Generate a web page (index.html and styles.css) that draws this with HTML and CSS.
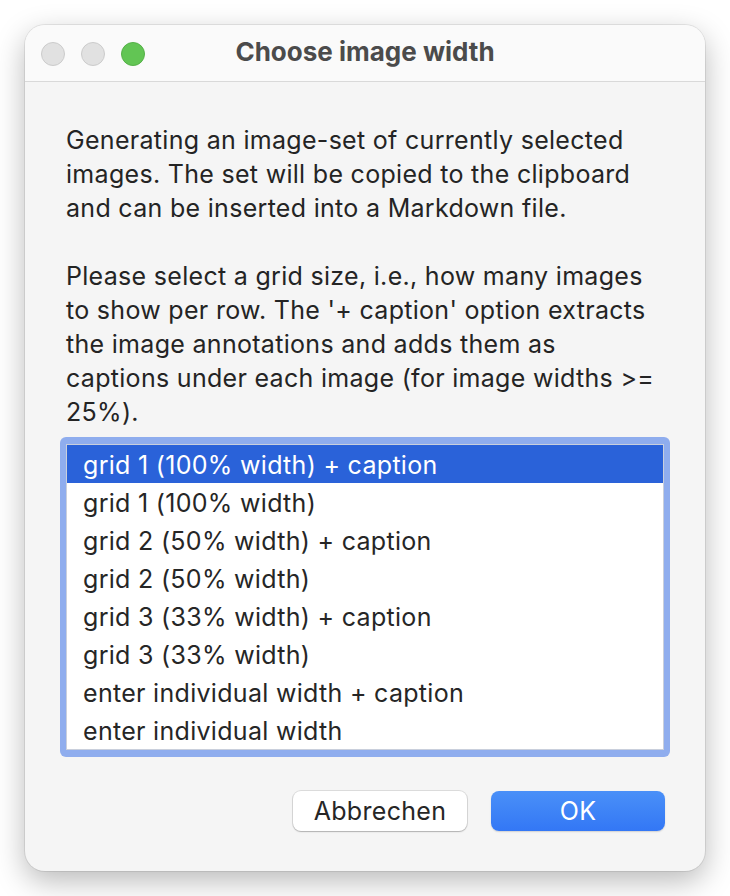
FILE: index.html
```html
<!DOCTYPE html>
<html>
<head>
<meta charset="utf-8">
<link rel="stylesheet" href="styles.css">
</head>
<body>
<div class="window">
  <div class="titlebar">
    <div class="lights">
      <span class="light gray"></span>
      <span class="light gray"></span>
      <span class="light green"></span>
    </div>
    <div class="title">Choose image width</div>
  </div>
  <div class="content">
    <p class="msg">Generating an image-set of currently selected images. The set will be copied to the clipboard and can be inserted into a Markdown file.</p>
    <p class="msg">Please select a grid size, i.e., how many images to show per row. The '+ caption' option extracts the image annotations and adds them as captions under each image (for image widths &gt;= 25%).</p>
    <div class="listring">
      <ul class="list">
        <li class="row selected">grid 1 (100% width) + caption</li>
        <li class="row">grid 1 (100% width)</li>
        <li class="row">grid 2 (50% width) + caption</li>
        <li class="row">grid 2 (50% width)</li>
        <li class="row">grid 3 (33% width) + caption</li>
        <li class="row">grid 3 (33% width)</li>
        <li class="row">enter individual width + caption</li>
        <li class="row">enter individual width</li>
      </ul>
    </div>
    <div class="buttons">
      <button class="btn cancel">Abbrechen</button>
      <button class="btn ok">OK</button>
    </div>
  </div>
</div>
</body>
</html>
```
FILE: styles.css
```css
html, body {
  margin: 0;
  padding: 0;
  background: #ffffff;
}
body {
  width: 730px;
  height: 896px;
  font-family: Inter, "Noto Sans", "Liberation Sans", sans-serif;
  color: #222222;
}
.window {
  margin: 25px 0 0 25px;
  width: 680px;
  height: 846px;
  box-sizing: border-box;
  background: #f5f5f5;
  border-radius: 20px;
  box-shadow: 0 0 0 1px rgba(0,0,0,0.08), 0 10px 30px rgba(0,0,0,0.28);
  display: flex;
  flex-direction: column;
  overflow: hidden;
}
.titlebar {
  height: 56px;
  flex: none;
  background: #fafafa;
  border-bottom: 1px solid #d9d9d9;
  display: flex;
  align-items: center;
  position: relative;
}
.lights {
  display: flex;
  gap: 16px;
  margin-left: 16px;
  margin-top: 1px;
}
.light {
  width: 24px;
  height: 24px;
  border-radius: 50%;
  box-sizing: border-box;
}
.light.gray {
  background: #e1e1e1;
  border: 1px solid #cbcbcb;
}
.light.green {
  background: #62c554;
  border: 1px solid #55b048;
}
.title {
  position: absolute;
  left: 0;
  right: 0;
  top: 12px;
  line-height: 30px;
  text-align: center;
  font-size: 26px;
  font-weight: 700;
  color: #4b4b4b;
  pointer-events: none;
}
.content {
  flex: 1;
  padding: 41px 35px 0 35px;
  display: flex;
  flex-direction: column;
}
.msg {
  margin: 0 12px 34px 6px;
  font-size: 25px;
  line-height: 34px;
  letter-spacing: 0.3px;
  color: #242424;
}
.msg + .msg {
  margin-bottom: 8px;
}
.listring {
  background: #8fadee;
  border-radius: 6px;
  padding: 7px 6px 7px 6px;
}
.list {
  list-style: none;
  margin: 0;
  padding: 0;
  background: #ffffff;
  border: 1px solid #c9cfdc;
}
.row {
  height: 38px;
  box-sizing: border-box;
  padding-top: 2px;
  line-height: 36px;
  padding-left: 16px;
  font-size: 25px;
  letter-spacing: 0.3px;
  color: #262626;
}
.row.selected {
  background: #2a62d9;
  color: #ffffff;
}
.buttons {
  display: flex;
  justify-content: flex-end;
  gap: 24px;
  margin-top: 34px;
  padding-right: 5px;
}
.btn {
  width: 174px;
  height: 40px;
  border-radius: 8px;
  font-family: Inter, "Noto Sans", "Liberation Sans", sans-serif;
  font-size: 25px;
  letter-spacing: 0.3px;
  padding: 0;
  box-sizing: border-box;
}
.btn.cancel {
  background: #ffffff;
  color: #262626;
  border: none;
  box-shadow: 0 0 0 1px rgba(0,0,0,0.1), 0 1px 1.5px rgba(0,0,0,0.2);
}
.btn.ok {
  background: linear-gradient(#4a90f8, #3377f5);
  color: #ffffff;
  border: none;
  box-shadow: 0 1px 1.5px rgba(0,0,0,0.15);
}
```
